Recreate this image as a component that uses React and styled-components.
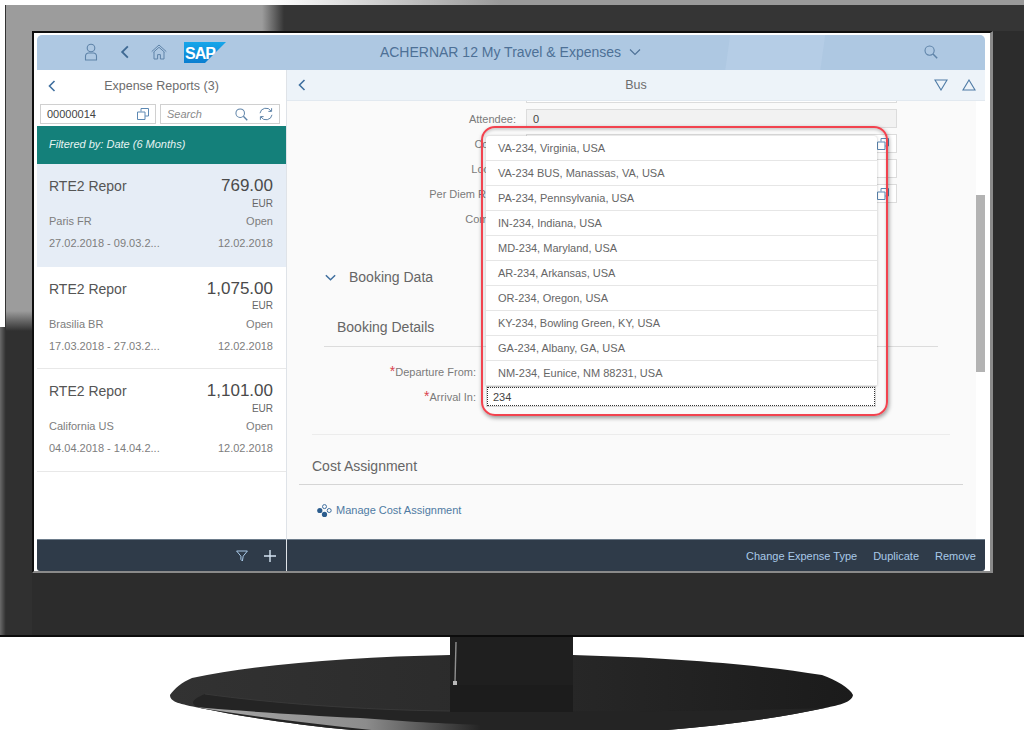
import React from 'react';
import styled, {createGlobalStyle} from 'styled-components';

const GlobalStyle = createGlobalStyle`
  html, body {
    margin: 0;
    padding: 0;
    background: #fff;
  }
  body {
    font-family: "Liberation Sans", Arial, sans-serif;
  }
`

const Page = styled.div`
  width: 1024px;
  height: 730px;
  padding-top: 5px;
  box-sizing: border-box;
  overflow: hidden;
  background: #fff linear-gradient(to right, #fff 270px, #9a9a9a 500px) no-repeat 0 0 / 100% 5px;
`

const Bezel = styled.div`
  height: 632px;
  box-sizing: border-box;
  padding: 26px 31px 62px 32px;
  border-bottom: 2px solid #0c0c0c;
  background-color: #2c2c2c;
  background-image:
    linear-gradient(#fff, #fff),
    linear-gradient(to right, #6a6a6a, #2e2e2e 6px),
    linear-gradient(to bottom, #9c9c9c 306px, #303030 326px),
    linear-gradient(to right, #9c9c9c 262px, #353535 284px),
    linear-gradient(to bottom, #4a4a4a, #2c2c2c 5px);
  background-size: 5px 322px, 6px 100%, 32px 100%, 100% 26px, 100% 26px;
  background-repeat: no-repeat;
`

const Frame = styled.div`
  height: 542px;
  box-sizing: border-box;
  display: flex;
  padding: 2px 5px 1px 3px;
  background: #fff;
  border-style: solid;
  border-color: #0e0e0e #8a8a8a #8a8a8a #0e0e0e;
  border-width: 2px 3px 2px 2px;
`

const Screen = styled.div`
  position: relative;
  width: 948px;
  height: 536px;
  display: flex;
  flex-direction: column;
  border-radius: 5px 5px 3px 3px;
  overflow: hidden;
`

const ShellBar = styled.header`
  height: 35px;
  flex: none;
  box-sizing: border-box;
  padding-bottom: 1px;
  display: grid;
  grid-template-columns: 1fr auto 1fr;
  align-items: center;
  background-color: #aec8e2;
  background-image: linear-gradient(98deg, transparent 686px, #b5cde6 687px, #b5cde6 780px, transparent 781px);
`

const ShellLeft = styled.div`
  display: flex;
  align-items: center;
  padding-left: 45px;
`

const ShellRight = styled.div`
  display: flex;
  justify-content: flex-end;
  padding-right: 47px;
`

const ShellSlot = styled.span`
  display: flex;
  justify-content: center;
  width: ${p => p.$width}px;
`

const ShellTitle = styled.div`
  display: flex;
  align-items: center;
  gap: 7px;
  padding-bottom: 1px;
  color: #4d7096;
  font-size: 14px;
`

const Panes = styled.div`
  flex: 1;
  min-height: 0;
  display: grid;
  grid-template-columns: 250px 698px;
`

const Master = styled.section`
  display: flex;
  flex-direction: column;
  min-height: 0;
  background: #fff;
  border-right: 1px solid #dfe3e8;
`

const MasterHeader = styled.div`
  height: 31px;
  flex: none;
  display: grid;
  grid-template-columns: 30px 1fr 30px;
  align-items: center;
  justify-items: center;
  color: #6d6d6d;
  font-size: 12.5px;
`

const SearchRow = styled.div`
  display: flex;
  gap: 4px;
  padding: 3px 6px 2px 3px;
`

const Field = styled.div`
  display: flex;
  align-items: center;
  width: ${p => p.$width}px;
  height: 20px;
  box-sizing: border-box;
  padding: 0 6px;
  gap: 11px;
  border: 1px solid #d0d0d0;
  font-size: 11px;
  color: ${p => (p.$placeholder ? '#8a8a8a' : '#444')};
  font-style: ${p => (p.$placeholder ? 'italic' : 'normal')};
  background: #fff;
`

const FieldText = styled.span`
  flex: 1;
`

const FilterBar = styled.div`
  height: 38px;
  flex: none;
  box-sizing: border-box;
  padding: 0 0 2px 12px;
  display: flex;
  align-items: center;
  background: #14807a;
  color: #e6f3f2;
  font-size: 11px;
  font-style: italic;
`

const ReportList = styled.div`
  flex: 1;
`

const Report = styled.article`
  height: 102.6px;
  box-sizing: border-box;
  padding: 11px 13px 0 12px;
  background: ${p => (p.$selected ? '#e6edf6' : '#fff')};
  border-bottom: 1px solid ${p => (p.$selected ? '#e6edf6' : '#e8e8e8')};
`

const ReportRow = styled.div`
  display: flex;
  justify-content: space-between;
  align-items: center;
  height: ${p => p.$height}px;
  margin-top: ${p => p.$gap || 0}px;
  font-size: ${p => p.$size}px;
  color: ${p => p.$color};
`

const Amount = styled.span`
  font-size: 17px;
  color: #4a4a4a;
`

const Currency = styled(ReportRow)`
  justify-content: flex-end;
`

const Footer = styled.footer`
  height: 32px;
  flex: none;
  box-sizing: border-box;
  display: flex;
  justify-content: flex-end;
  align-items: center;
  border-top: 1px solid #6d7c8b;
  background: #2f3b49;
  color: #a9c9e8;
  font-size: 11px;
`

const MasterFooter = styled(Footer)`
  gap: 16px;
  padding-right: 10px;
`

const DetailFooter = styled(Footer)`
  gap: 16px;
  padding-right: 9px;
`

const Detail = styled.section`
  display: flex;
  flex-direction: column;
  min-height: 0;
`

const DetailHeader = styled.div`
  height: 31px;
  flex: none;
  box-sizing: border-box;
  display: grid;
  grid-template-columns: 1fr auto 1fr;
  align-items: center;
  background: #edf3f9;
  border-bottom: 1px solid #e2e9f0;
  color: #6d6d6d;
  font-size: 12.5px;
`

const HeaderBack = styled.div`
  padding-left: 8px;
  display: flex;
`

const HeaderNav = styled.div`
  display: flex;
  justify-content: flex-end;
  gap: 14px;
  padding-right: 9px;
`

const DetailBody = styled.div`
  flex: 1;
  min-height: 0;
  display: flex;
  overflow: hidden;
  background: #fafafa;
`

const Form = styled.div`
  flex: 1;
  margin-top: -17px;
`

const Scrollbar = styled.div`
  width: 9px;
  flex: none;
  box-sizing: border-box;
  padding-top: 94px;
  background: #fff;
`

const ScrollThumb = styled.div`
  height: 177px;
  background: #b3b3b3;
`

const FormRow = styled.div`
  display: grid;
  grid-template-columns: ${p => p.$label}px ${p => p.$input}px;
  column-gap: ${p => p.$gap}px;
  align-items: center;
  height: 19px;
  margin-bottom: 6px;
`

const Label = styled.label`
  text-align: right;
  font-size: 11px;
  color: #7a7a7a;
  white-space: nowrap;
`

const Required = styled.span`
  color: #d9434e;
  font-size: 14px;
  line-height: 10px;
`

const Input = styled.div`
  height: 19px;
  box-sizing: border-box;
  display: flex;
  align-items: center;
  justify-content: space-between;
  padding: 0 7px 0 6px;
  font-size: 11px;
  color: #444;
  border: 1px solid #dcdcdc;
  background: ${p => (p.$readOnly ? '#f2f2f2' : '#fff')};
`

const FocusInput = styled(Input)`
  padding-left: 5px;
  border: 1px dotted #333;
  outline: 1px solid #d5d5d5;
`

const SectionToggle = styled.div`
  display: flex;
  align-items: center;
  gap: 12px;
  height: 20px;
  margin: 39px 0 0 37px;
  font-size: 14px;
  color: #666;
`

const SectionTitle = styled.div`
  height: 20px;
  line-height: 20px;
  margin: ${p => p.$top}px 0 0 ${p => p.$left}px;
  font-size: 14px;
  color: #666;
`

const Rule = styled.hr`
  border: 0;
  height: 1px;
  margin: ${p => p.$top}px ${p => p.$right}px ${p => p.$bottom}px ${p => p.$left}px;
  background: ${p => p.$color || '#dcdcdc'};
`

const ManageLink = styled.a`
  display: flex;
  align-items: center;
  gap: 4px;
  height: 20px;
  margin: 15px 0 0 30px;
  font-size: 11px;
  color: #4f7aa3;
`

const Dropdown = styled.ul`
  position: absolute;
  left: 449px;
  top: 101px;
  width: 391px;
  margin: 0;
  padding: 0;
  list-style: none;
  background: #fff;
  border-radius: 3px 3px 0 0;
  box-shadow: 0 0 3px rgba(0, 0, 0, .25);
`

const DropdownItem = styled.li`
  height: 25px;
  box-sizing: border-box;
  padding-left: 12px;
  line-height: 25px;
  font-size: 11px;
  color: #666;
  border-bottom: 1px solid #e6e6e6;
`

const Highlight = styled.div`
  position: absolute;
  left: 444px;
  top: 91px;
  width: 407px;
  height: 290px;
  box-sizing: border-box;
  border: 2px solid #f2434f;
  border-radius: 14px;
  box-shadow: 1px 2px 4px rgba(0, 0, 0, .4), inset 0 2px 3px rgba(0, 0, 0, .18);
  pointer-events: none;
`

const StandArt = styled.svg`
  display: block;
`

const Chevron = ({dir = 'left', size = 14, color = '#3f6f9f', width = 1.6}) => {
  const d = {
    left: 'M9.5 2 4.5 7l5 5',
    down: 'M2 4.5 7 9.5l5-5',
  }[dir]
  return (
    <svg width={size} height={size} viewBox='0 0 14 14' fill='none' stroke={color} strokeWidth={width}>
      <path d={d}/>
    </svg>
  )
}

const PersonIcon = () => (
  <svg width='14' height='18' viewBox='0 0 14 18' fill='none' stroke='#5e83a8' strokeWidth='1.1'>
    <circle cx='7' cy='5' r='3.8'/>
    <path d='M1.5 17V13a3 3 0 0 1 3-3h5a3 3 0 0 1 3 3v4z'/>
  </svg>
)

const HomeIcon = () => (
  <svg width='16' height='16' viewBox='0 0 16 16' fill='none' stroke='#5e83a8' strokeWidth='1'>
    <path d='M.7 7.6 8 1l7.3 6.6'/>
    <path d='M2.5 8.2 8 3.3l5.5 4.9'/>
    <path d='M3 8v7h3.6v-4.4h2.8V15H13V8'/>
  </svg>
)

const SapLogo = () => (
  <svg width='42' height='21' viewBox='0 0 42 21'>
    <defs>
      <linearGradient id='sapBlue' x1='0' y1='0' x2='0' y2='1'>
        <stop offset='0' stopColor='#16a6ea'/>
        <stop offset='1' stopColor='#0a7ed0'/>
      </linearGradient>
    </defs>
    <path d='M0 0H42L21 21H0z' fill='url(#sapBlue)'/>
    <text x='1' y='16.5' fill='#fff' fontSize='16' fontWeight='700' fontFamily='Liberation Sans' letterSpacing='-1'>SAP</text>
  </svg>
)

const SearchIcon = ({size = 14, color = '#5e83a8'}) => (
  <svg width={size} height={size} viewBox='0 0 14 14' fill='none' stroke={color} strokeWidth='1.1'>
    <circle cx='5.6' cy='5.6' r='4.6'/>
    <path d='M9 9l4.2 4.2' strokeWidth='1.5'/>
  </svg>
)

const CopyIcon = () => (
  <svg width='12' height='12' viewBox='0 0 12 12' fill='none' stroke='#5c88b3' strokeWidth='1'>
    <path d='M4 3.5V.5h7.5v7.5H8.2'/>
    <path d='M.5 4h7.5v7.5H.5z'/>
  </svg>
)

const RefreshIcon = () => (
  <svg width='14' height='14' viewBox='0 0 14 14' fill='none' stroke='#5e83a8' strokeWidth='1'>
    <path d='M1 6.2A6 6 0 0 1 12 4'/>
    <path d='M13 7.8A6 6 0 0 1 2 10'/>
    <path d='M12.6 1.2V4.4H9.4'/>
    <path d='M1.4 12.8V9.6h3.2'/>
  </svg>
)

const TriangleIcon = ({up}) => (
  <svg width='14' height='12' viewBox='0 0 14 12' fill='none' stroke='#4f7ba6' strokeWidth='1.1'>
    <path d={up ? 'M7 1l6 10H1z' : 'M1 1h12L7 11z'}/>
  </svg>
)

const FilterIcon = () => (
  <svg width='12' height='12' viewBox='0 0 12 12' fill='none' stroke='#a9c9e8' strokeWidth='1'>
    <path d='M.6 1h10.8L7.2 6.2 6.4 11 4.9 9.4V6.2z'/>
  </svg>
)

const PlusIcon = () => (
  <svg width='12' height='12' viewBox='0 0 12 12' fill='none' stroke='#d5e4f2' strokeWidth='1.4'>
    <path d='M6 0v12M0 6h12'/>
  </svg>
)

const ManageIcon = () => (
  <svg width='15' height='13' viewBox='0 0 15 13'>
    <circle cx='7.5' cy='2.6' r='2' fill='none' stroke='#3f6f9f'/>
    <circle cx='12.2' cy='6.5' r='2' fill='none' stroke='#3f6f9f'/>
    <circle cx='2.8' cy='6.5' r='2.6' fill='#2c5d8e'/>
    <circle cx='7.5' cy='10.4' r='2.6' fill='#2c5d8e'/>
  </svg>
)

const Stand = () => (
  <StandArt width='1024' height='93' viewBox='0 637 1024 93'>
    <defs>
      <linearGradient id='baseFill' x1='0' y1='0' x2='1' y2='0'>
        <stop offset='0' stopColor='#323232'/>
        <stop offset='.45' stopColor='#2b2b2b'/>
        <stop offset='1' stopColor='#1b1b1b'/>
      </linearGradient>
      <linearGradient id='rimFill' gradientUnits='userSpaceOnUse' x1='195' y1='0' x2='480' y2='0'>
        <stop offset='0' stopColor='#a8a8a8'/>
        <stop offset='.6' stopColor='#8c8c8c'/>
        <stop offset='1' stopColor='#252525'/>
      </linearGradient>
    </defs>
    <path d='M170 695C174 689 182 682 192 678C260 664 350 657 450 655H573C680 658 760 665 822 675C836 680 850 688 853 695C852 702 840 705 825 708C760 722 680 730 600 735H420C330 730 260 720 200 708C180 704 170 702 170 695Z' fill='url(#baseFill)'/>
    <path d='M205 694C270 703 360 710 450 711C600 712 720 711 825 708C760 722 680 730 600 735H420C330 730 260 720 200 708C190 705 190 700 205 694Z' fill='#242424'/>
    <path d='M205 694C270 703 360 710 450 711' fill='none' stroke='#383838'/>
    <path d='M195 707C240 711 300 715 360 718C400 721 430 723 480 725V735H420C340 727 260 718 195 707Z' fill='url(#rimFill)'/>
    <path d='M450 637H573V685H450z' fill='#1f1f1f'/>
    <path d='M450 685H573V712H450z' fill='#1c1c1c'/>
    <path d='M456 642 455 682' fill='none' stroke='#8f8f8f' strokeWidth='1.4'/>
    <path d='M453 681H457V685H453z' fill='#b8b8b8'/>
  </StandArt>
)

const reports = [
  {amount: '769.00', place: 'Paris FR', range: '27.02.2018 - 09.03.2...', selected: true},
  {amount: '1,075.00', place: 'Brasilia BR', range: '17.03.2018 - 27.03.2...'},
  {amount: '1,101.00', place: 'California US', range: '04.04.2018 - 14.04.2...'},
]

const suggestions = [
  'VA-234, Virginia, USA',
  'VA-234 BUS, Manassas, VA, USA',
  'PA-234, Pennsylvania, USA',
  'IN-234, Indiana, USA',
  'MD-234, Maryland, USA',
  'AR-234, Arkansas, USA',
  'OR-234, Oregon, USA',
  'KY-234, Bowling Green, KY, USA',
  'GA-234, Albany, GA, USA',
  'NM-234, Eunice, NM 88231, USA',
]

const App = () => (
  <Page>
    <GlobalStyle/>
    <Bezel>
      <Frame>
        <Screen>
          <ShellBar>
            <ShellLeft>
              <ShellSlot $width={18}><PersonIcon/></ShellSlot>
              <ShellSlot $width={50}><Chevron size={16} color='#3f6a94'/></ShellSlot>
              <ShellSlot $width={18}><HomeIcon/></ShellSlot>
              <ShellSlot $width={16}/>
              <SapLogo/>
            </ShellLeft>
            <ShellTitle>
              ACHERNAR 12 My Travel &amp; Expenses
              <Chevron dir='down' size={14} color='#4d7096' width={1.1}/>
            </ShellTitle>
            <ShellRight><SearchIcon/></ShellRight>
          </ShellBar>
          <Panes>
            <Master>
              <MasterHeader>
                <Chevron/>
                <span>Expense Reports (3)</span>
              </MasterHeader>
              <SearchRow>
                <Field $width={116}><FieldText>00000014</FieldText><CopyIcon/></Field>
                <Field $width={120} $placeholder><FieldText>Search</FieldText><SearchIcon size={13}/><RefreshIcon/></Field>
              </SearchRow>
              <FilterBar>Filtered by: Date (6 Months)</FilterBar>
              <ReportList>
                {reports.map(report =>
                  <Report key={report.amount} $selected={report.selected}>
                    <ReportRow $height={22} $size={14} $color='#555'>
                      <span>RTE2 Repor</span>
                      <Amount>{report.amount}</Amount>
                    </ReportRow>
                    <Currency $height={10} $gap={1} $size={10} $color='#666'>EUR</Currency>
                    <ReportRow $height={18} $gap={4} $size={11} $color='#7d7d7d'>
                      <span>{report.place}</span>
                      <span>Open</span>
                    </ReportRow>
                    <ReportRow $height={18} $gap={4} $size={11} $color='#7d7d7d'>
                      <span>{report.range}</span>
                      <span>12.02.2018</span>
                    </ReportRow>
                  </Report>)}
              </ReportList>
              <MasterFooter>
                <FilterIcon/>
                <PlusIcon/>
              </MasterFooter>
            </Master>
            <Detail>
              <DetailHeader>
                <HeaderBack><Chevron/></HeaderBack>
                <span>Bus</span>
                <HeaderNav><TriangleIcon/><TriangleIcon up/></HeaderNav>
              </DetailHeader>
              <DetailBody>
                <Form>
                  <FormRow $label={229} $input={371} $gap={10}><Label/><Input/></FormRow>
                  <FormRow $label={229} $input={371} $gap={10}><Label>Attendee:</Label><Input $readOnly>0</Input></FormRow>
                  <FormRow $label={229} $input={371} $gap={10}><Label>Country:</Label><Input><span/><CopyIcon/></Input></FormRow>
                  <FormRow $label={229} $input={371} $gap={10}><Label>Location:</Label><Input/></FormRow>
                  <FormRow $label={229} $input={371} $gap={10}><Label>Per Diem Region:</Label><Input><span/><CopyIcon/></Input></FormRow>
                  <FormRow $label={229} $input={371} $gap={10}><Label>Comment:</Label></FormRow>
                  <SectionToggle>
                    <Chevron dir='down' size={13}/>
                    Booking Data
                  </SectionToggle>
                  <SectionTitle $top={30} $left={50}>Booking Details</SectionTitle>
                  <Rule $top={9} $left={37} $right={38} $bottom={15}/>
                  <FormRow $label={189} $input={388} $gap={11}>
                    <Label><Required>*</Required>Departure From:</Label>
                    <Input/>
                  </FormRow>
                  <FormRow $label={189} $input={388} $gap={11}>
                    <Label><Required>*</Required>Arrival In:</Label>
                    <FocusInput>234</FocusInput>
                  </FormRow>
                  <Rule $top={28} $left={25} $right={26} $bottom={0} $color='#ececec'/>
                  <SectionTitle $top={21} $left={25}>Cost Assignment</SectionTitle>
                  <Rule $top={8} $left={12} $right={13} $bottom={0} $color='#d5d5d5'/>
                  <ManageLink>
                    <ManageIcon/>
                    Manage Cost Assignment
                  </ManageLink>
                </Form>
                <Scrollbar><ScrollThumb/></Scrollbar>
              </DetailBody>
              <DetailFooter>
                <span>Change Expense Type</span>
                <span>Duplicate</span>
                <span>Remove</span>
              </DetailFooter>
            </Detail>
          </Panes>
          <Dropdown>
            {suggestions.map(text => <DropdownItem key={text}>{text}</DropdownItem>)}
          </Dropdown>
          <Highlight/>
        </Screen>
      </Frame>
    </Bezel>
    <Stand/>
  </Page>
)

export default App
